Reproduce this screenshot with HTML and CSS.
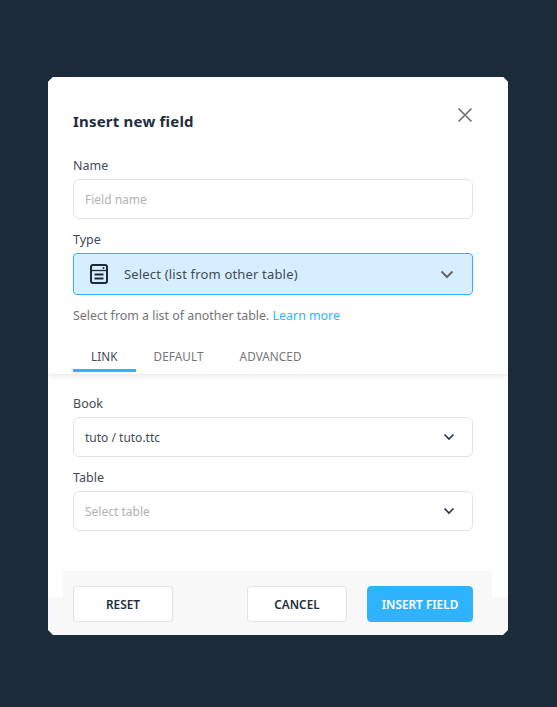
FILE: index.html
```html
<!DOCTYPE html>
<html lang="en">
<head>
    <meta charset="UTF-8">
    <meta name="viewport" content="width=device-width, initial-scale=1.0">
    <title>Insert new field</title>
    <link rel="stylesheet" href="styles.css">
</head>
<body>
    <div class="modal">
        <div class="modal-top">
            <div class="modal-header">
                <h2>Insert new field</h2>
                <button class="close" aria-label="Close">
                    <svg width="16" height="16" viewBox="0 0 16 16"><path d="M1.500 1.500l13 13M14.500 1.500l-13 13"/></svg>
                </button>
            </div>

            <label class="label">Name</label>
            <div class="input placeholder">Field name</div>

            <label class="label">Type</label>
            <div class="type-select">
                <svg class="type-icon" width="18" height="20" viewBox="0 0 18 20">
                    <rect x="1" y="1" width="16" height="18" rx="2"/>
                    <path class="thin" d="M2 6.500h14"/>
                    <path d="M4.500 10.500h9M4.500 14.500h9"/>
                    <circle cx="13.500" cy="4" r="1"/>
                </svg>
                <span class="type-name">Select (list from other table)</span>
                <svg class="chevron chevron-big" width="14" height="9" viewBox="0 0 14 9"><path d="M1.500 1.500L7 7l5.500-5.500"/></svg>
            </div>
            <p class="help">Select from a list of another table. <a href="#">Learn more</a></p>

            <div class="tabs">
                <span class="tab active">LINK</span>
                <span class="tab">DEFAULT</span>
                <span class="tab">ADVANCED</span>
            </div>
        </div>

        <div class="modal-body">
            <label class="label">Book</label>
            <div class="input select">
                <span>tuto / tuto.ttc</span>
                <svg class="chevron" width="12" height="8" viewBox="0 0 12 8"><path d="M1.500 1.500L6 6l4.500-4.500"/></svg>
            </div>

            <label class="label">Table</label>
            <div class="input select placeholder">
                <span>Select table</span>
                <svg class="chevron" width="12" height="8" viewBox="0 0 12 8"><path d="M1.500 1.500L6 6l4.500-4.500"/></svg>
            </div>
        </div>

        <div class="modal-footer">
            <button class="btn">RESET</button>
            <div class="footer-right">
                <button class="btn">CANCEL</button>
                <button class="btn primary">INSERT FIELD</button>
            </div>
        </div>
    </div>
</body>
</html>
```

FILE: styles.css
```css
body {
    margin: 0;
    height: 707px;
    overflow: hidden;
    background-color: #1b2b3a;
    font-family: "Noto Sans", "Open Sans", sans-serif;
    font-size: 13px;
    color: #1f2d3d;
}

.modal {
    width: 460px;
    height: 558px;
    margin: 77px 0 0 48px;
    display: flex;
    flex-direction: column;
    background: linear-gradient(to top, #f8f8f8 38px, #fff 38px);
    clip-path: polygon(5px 0, calc(100% - 5px) 0, 100% 5px, 100% calc(100% - 5px), calc(100% - 5px) 100%, 5px 100%, 0 calc(100% - 5px), 0 5px);
}

.modal-top {
    padding: 0 35px 0 25px;
    height: 297px;
    background: #fff;
    box-shadow: 0 2px 6px rgba(0, 0, 0, 0.1);
    position: relative;
}

.modal-header {
    height: 80px;
    display: flex;
    justify-content: space-between;
    align-items: flex-start;
}

.modal-header h2 {
    margin: 34px 0 0;
    font-size: 15px;
    line-height: 20px;
    font-weight: 700;
    letter-spacing: 0.2px;
}

.close {
    margin: 30px 0 0;
    padding: 0;
    border: none;
    background: none;
    width: 16px;
    height: 16px;
}

.close svg {
    display: block;
    fill: none;
    stroke: #6e6e6e;
    stroke-width: 1.6;
}

.label {
    display: block;
    height: 22px;
    line-height: 18px;
    font-size: 12.500px;
    color: #414b55;
}

.input {
    height: 40px;
    box-sizing: border-box;
    border: 1px solid #e3e3e3;
    border-radius: 6px;
    background: #fff;
    padding: 0 11px;
    margin-bottom: 12px;
    line-height: 40px;
    color: #414b55;
    font-size: 12px;
}

.placeholder {
    color: #b2b2b2;
}

.select {
    display: flex;
    justify-content: space-between;
    align-items: center;
    padding-right: 17px;
}

.select span {
    padding-top: 2px;
}

.type-select {
    height: 42px;
    box-sizing: border-box;
    display: flex;
    align-items: center;
    border: 1px solid #30b3ff;
    border-radius: 4px;
    background: #d6eeff;
    padding: 0 18px 0 16px;
    color: #414b55;
}

.type-icon {
    fill: none;
    stroke: #1b2b3a;
    stroke-width: 2;
}

.type-icon .thin {
    stroke-width: 1.300;
}

.type-icon circle {
    fill: #1b2b3a;
    stroke: none;
}

.type-name {
    margin-left: 16px;
    flex: 1;
    letter-spacing: 0.17px;
}

.chevron {
    fill: none;
    stroke: #2b3845;
    stroke-width: 1.700;
}

.chevron-big {
    stroke: #666;
    stroke-width: 2;
}

.help {
    margin: 12px 0 0;
    line-height: 18px;
    font-size: 12.400px;
    color: #757575;
}

.help a {
    color: #30b3ff;
    text-decoration: none;
}

.tabs {
    display: flex;
    margin-top: 17px;
}

.tab {
    height: 30px;
    box-sizing: border-box;
    line-height: 28px;
    padding: 0 18px;
    font-size: 11.700px;
    letter-spacing: 0.1px;
    color: #757575;
}

.tab.active {
    color: #414b55;
    border-bottom: 3px solid #30b3ff;
}

.modal-body {
    padding: 20px 35px 0 25px;
    height: 197px;
    box-sizing: border-box;
}

.modal-body .label {
    height: 23px;
    line-height: 20px;
}

.modal-body .input {
    margin-bottom: 11px;
}

.modal-footer {
    margin: 0 16px 0 15px;
    padding: 15px 19px 0 10px;
    height: 64px;
    box-sizing: border-box;
    background: #f8f8f8;
    display: flex;
    justify-content: space-between;
    align-items: flex-start;
}

.footer-right {
    display: flex;
    gap: 20px;
}

.btn {
    height: 36px;
    width: 100px;
    padding: 0;
    border: 1px solid #e3e3e3;
    border-radius: 4px;
    background: #fff;
    color: #1f2d3d;
    font-family: inherit;
    font-size: 11.800px;
    font-weight: 600;
}

.btn.primary {
    width: 106px;
    border-color: #30b3ff;
    background: #30b3ff;
    color: #fff;
}
```
